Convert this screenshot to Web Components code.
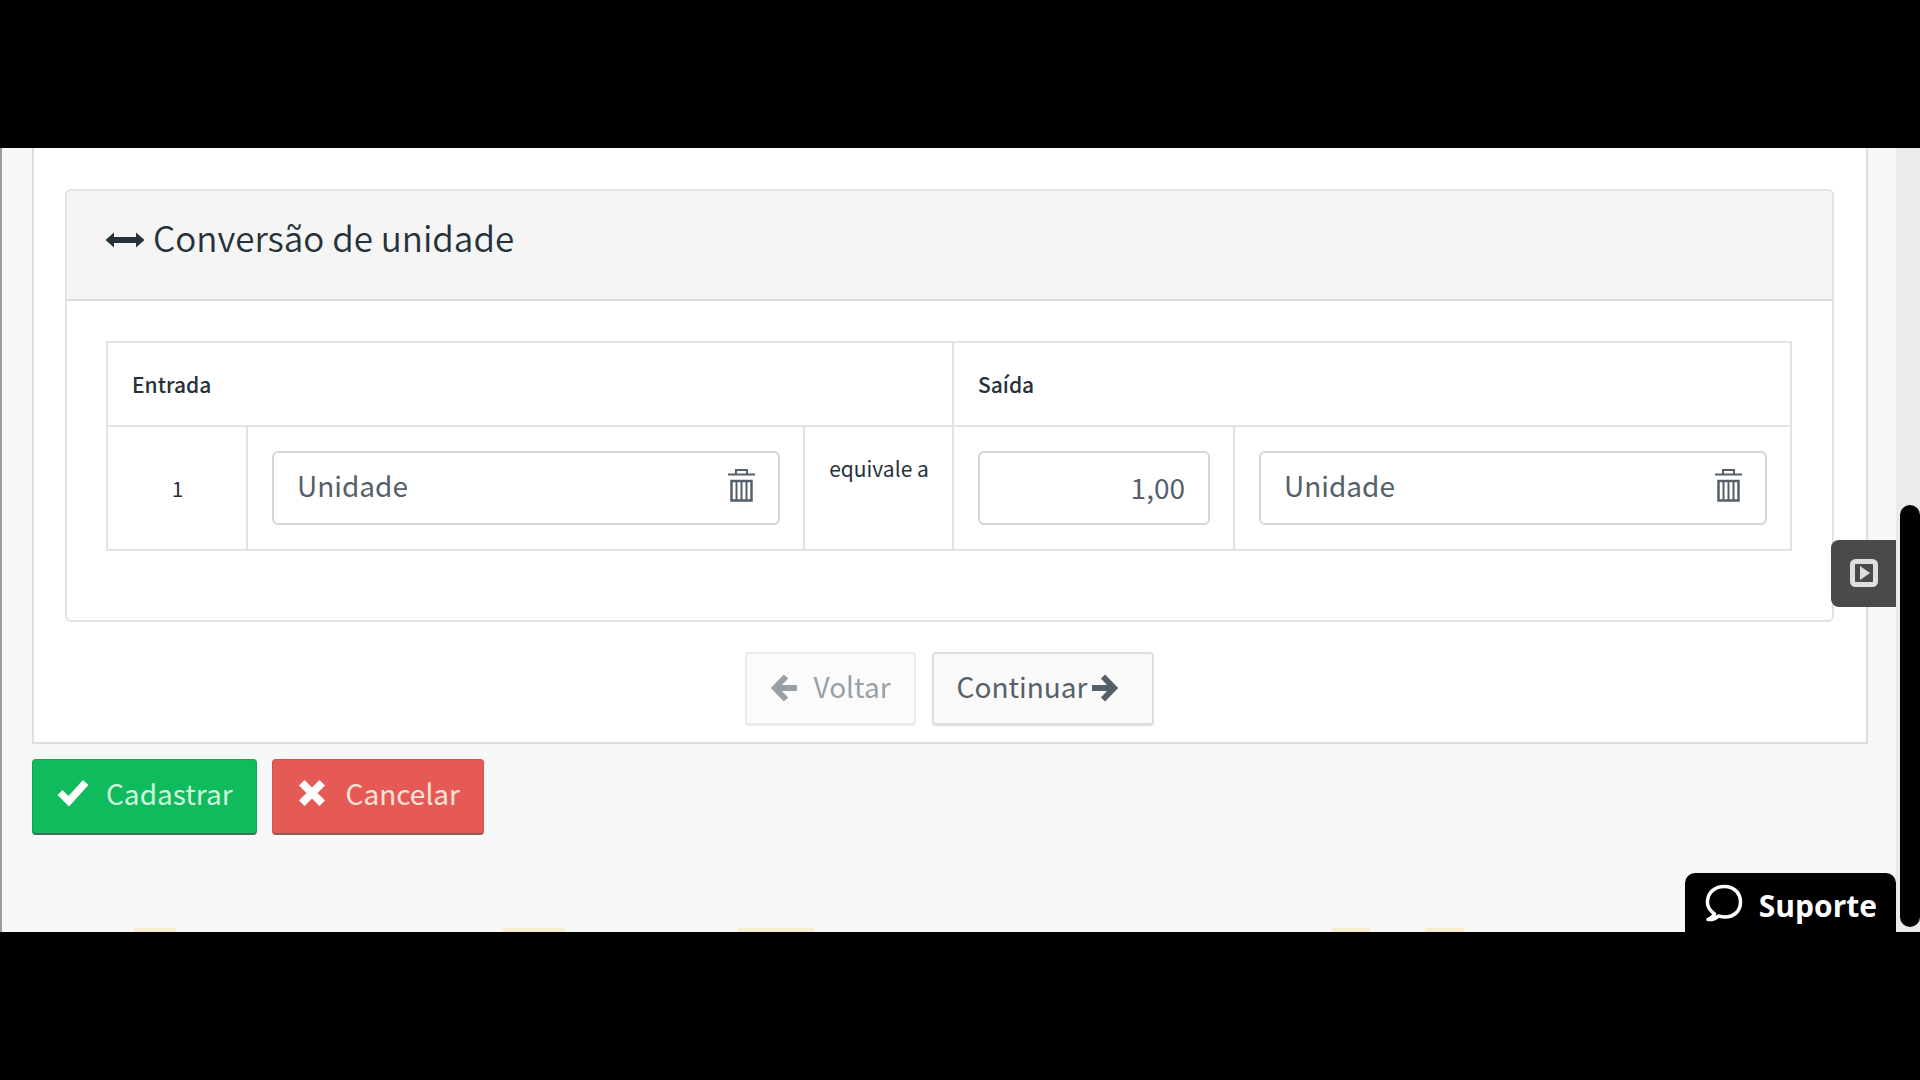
<!DOCTYPE html>
<html lang="pt-BR">
<head>
<meta charset="utf-8">
<title>Conversão de unidade</title>
<style>
  body {
    margin: 0;
    background: #000;
    color: #26323a;
    font-family: "Noto Sans CJK SC", "Noto Sans", sans-serif;
    --line: #e3e3e3;
    --muted: #55606a;
  }
</style>
</head>
<body>
<app-frame>
  <step-panel>
    <section-card>
      <span slot="title">Conversão de unidade</span>
      <conversion-table></conversion-table>
    </section-card>
    <action-button slot="nav" kind="plain" icon="left" disabled>Voltar</action-button>
    <action-button slot="nav" kind="plain" icon="right" trailing>Continuar</action-button>
  </step-panel>
  <form-actions>
    <action-button kind="success" icon="check">Cadastrar</action-button>
    <action-button kind="danger" icon="times">Cancelar</action-button>
  </form-actions>
  <highlight-row slot="bottom"></highlight-row>
  <video-tab slot="overlay"></video-tab>
  <support-tab slot="overlay">Suporte</support-tab>
</app-frame>

<script>
const define = (name, html, setup) => {
  const template = document.createElement('template');
  template.innerHTML = html;
  customElements.define(name, class extends HTMLElement {
    constructor() {
      super();
      this.attachShadow({ mode: 'open' }).append(template.content.cloneNode(true));
    }
    connectedCallback() { if (setup) setup(this, this.shadowRoot); }
  });
};

const icons = {
  left: '<svg width="26" height="28" viewBox="0 0 26 28"><path d="M15 2.500 L4 14 L15 25.500 M5 14 H26" fill="none" stroke="currentColor" stroke-width="6"/></svg>',
  right: '<svg width="26" height="28" viewBox="0 0 26 28"><path d="M11 2.500 L22 14 L11 25.500 M21 14 H0" fill="none" stroke="currentColor" stroke-width="6"/></svg>',
  check: '<svg width="32" height="28" viewBox="0 0 32 28"><path d="M0.500 16 L5.500 11 L11.500 17 L26 1 L31.500 6 L12 27.500 Z" fill="#fff"/></svg>',
  times: '<svg width="28" height="28" viewBox="0 0 28 28"><path d="M1 6.500 L6.500 1 L14 8.500 L21.500 1 L27 6.500 L19.500 14 L27 21.500 L21.500 27 L14 19.500 L6.500 27 L1 21.500 L8.500 14 Z" fill="#fff"/></svg>'
};

define('app-frame', `
  <style>
    :host { display: flex; min-height: 100vh; box-sizing: border-box; padding: 148px 0; }
    .page { position: relative; flex: 1; min-width: 0; display: flex; flex-direction: column;
      background: #f8f8f8; border-left: 2px solid #a698a8; }
    main { flex: 1; padding: 0 28px 0 30px; }
    .track { position: relative; display: flex; flex-direction: column; box-sizing: border-box;
      width: 24px; padding: 357px 0 5px 4px; background: #ebebeb; }
    .thumb { flex: 1; border-radius: 10px; background: #000; }
  </style>
  <div class="page"><main><slot></slot></main><slot name="bottom"></slot><slot name="overlay"></slot></div>
  <div class="track"><div class="thumb"></div></div>`);

define('step-panel', `
  <style>
    :host { display: block; padding: 41px 32px 16px 31px; background: #fff;
      border: 2px solid #dedede; border-top: 0; }
    nav { display: flex; justify-content: center; gap: 16px; margin-top: 30px; }
  </style>
  <slot></slot>
  <nav><slot name="nav"></slot></nav>`);

define('section-card', `
  <style>
    :host { display: block; background: #fff; border: 2px solid var(--line); border-radius: 6px; overflow: hidden; }
    header { display: flex; align-items: flex-start; gap: 8px; padding: 22px 38px 38px; background: #f5f5f5;
      border-bottom: 2px solid #dcdcdc; }
    svg { padding-top: 19px; }
    h3 { margin: 0; font-size: 35px; font-weight: 350; line-height: 48px; }
    .body { padding: 40px 40px 69px 39px; }
  </style>
  <header>
    <svg width="40" height="16" viewBox="0 0 40 16"><path d="M0.500 8 L9 0.500 V5 H31 V0.500 L39.500 8 L31 15.500 V11 H9 V15.500 Z" fill="#26323a"/></svg>
    <h3><slot name="title"></slot></h3>
  </header>
  <div class="body"><slot></slot></div>`);

define('conversion-table', `
  <style>
    :host { display: block; }
    table { width: 100%; table-layout: fixed; border-collapse: collapse; font-size: 21px; line-height: 34px; }
    th, td { box-sizing: border-box; padding: 24px 23px 24px 24px; border: 2px solid var(--line); }
    th { text-align: left; font-weight: 500; }
    .one { width: 140px; } .link { width: 149px; } .amount { width: 281px; }
    td { text-align: center; font-weight: 400; }
    td.text { vertical-align: top; white-space: nowrap; }
  </style>
  <table>
    <colgroup><col class="one"><col><col class="link"><col class="amount"><col></colgroup>
    <thead><tr><th colspan="3" scope="colgroup">Entrada</th><th colspan="2" scope="colgroup">Saída</th></tr></thead>
    <tbody><tr>
      <td>1</td>
      <td><unit-field value="Unidade" label="Unidade de entrada" clearable></unit-field></td>
      <td class="text">equivale a</td>
      <td><unit-field value="1,00" label="Quantidade de saída"></unit-field></td>
      <td><unit-field value="Unidade" label="Unidade de saída" clearable></unit-field></td>
    </tr></tbody>
  </table>`);

define('unit-field', `
  <style>
    :host { display: flex; align-items: center; box-sizing: border-box; height: 74px; padding: 0 23px 2px;
      background: #fff; border: 2px solid #d4d6d6; border-radius: 6px; color: var(--muted); }
    :host([clearable]) { padding-bottom: 6px; }
    input { flex: 1; min-width: 0; width: 100%; padding: 0; border: 0; outline: 0; background: none; color: inherit;
      font: inherit; font-size: 28px; line-height: 40px; text-align: right; }
    :host([clearable]) input { text-align: left; }
    button { display: none; padding: 0; border: 0; background: none; color: inherit; }
    :host([clearable]) button { display: flex; }
  </style>
  <input type="text">
  <button type="button" aria-label="Remover">
    <svg width="27" height="34" viewBox="0 0 27 34" fill="none" stroke="currentColor">
      <path d="M0 6.500 H27 M8 6 V2 H19 V6" stroke-width="2"/>
      <path d="M3.500 13 H23.500 V32.500 H3.500 Z" stroke-width="2.500"/>
      <path d="M8.500 13 V32 M13.500 13 V32 M18.500 13 V32" stroke-width="2"/>
    </svg>
  </button>`, (host, root) => {
  const input = root.querySelector('input');
  input.value = host.getAttribute('value');
  input.setAttribute('aria-label', host.getAttribute('label'));
});

define('action-button', `
  <style>
    :host { display: block; }
    button { display: flex; align-items: center; gap: 17px; box-sizing: border-box; height: 74px; padding: 0 23px 5px 24px;
      border: 2px solid #dedede; border-bottom-width: 3px; border-radius: 4px; background: #fafafa;
      color: var(--muted); font: inherit; font-size: 28px; line-height: 40px; }
    :host([kind="plain"]) .icon { padding-top: 4px; }
    :host([trailing]) button { flex-direction: row-reverse; gap: 5px; padding: 0 34px 5px 23px; }
    :host([disabled]) button { opacity: .6; }
    :host([kind="success"]) button, :host([kind="danger"]) button { height: 76px; padding-bottom: 8px; }
    :host([kind="success"]) button { background: #0fbb5c; border: 1px solid #11a553; border-bottom: 2px solid #456d59; color: #d3f5dd; }
    :host([kind="danger"]) button { gap: 20px; padding-left: 25px; background: #e65a56; border: 1px solid #cf5350; border-bottom: 2px solid #8b5b5a; color: #fbe3da; }
    svg { display: block; }
  </style>
  <button type="button"><span class="icon"></span><span><slot></slot></span></button>`, (host, root) => {
  root.querySelector('.icon').innerHTML = icons[host.getAttribute('icon')];
  root.querySelector('button').disabled = host.hasAttribute('disabled');
});

define('form-actions', `
  <style>:host { display: flex; gap: 15px; padding-top: 15px; }</style>
  <slot></slot>`);

define('highlight-row', `
  <style>
    :host { display: grid; height: 4px;
      grid-template-columns: 132fr 42fr 327fr 62fr 173fr 76fr 518fr 38fr 55fr 39fr 432fr; }
    i:nth-of-type(even) { background: #f5edcd; }
  </style>
  <i></i><i></i><i></i><i></i><i></i><i></i><i></i><i></i><i></i><i></i><i></i>`);

define('video-tab', `
  <style>
    :host { position: absolute; right: 0; top: 50%; display: block; }
    button { display: flex; align-items: center; justify-content: center; width: 65px; height: 67px; padding: 0 0 2px;
      border: 0; border-radius: 8px 0 0 8px; background: #4a4a4a; }
  </style>
  <button type="button" aria-label="Vídeo">
    <svg width="28" height="28" viewBox="0 0 28 28"><rect x="2.500" y="2.500" width="23" height="23" rx="3" fill="none" stroke="#dedede" stroke-width="5"/><path d="M10 7 L20 14 L10 21 Z" fill="#dedede"/></svg>
  </button>`);

define('support-tab', `
  <style>
    :host { position: absolute; right: 0; bottom: 0; display: block; }
    button { display: flex; align-items: center; gap: 16px; height: 59px; padding: 0 19px 0 20px;
      border: 0; border-radius: 10px 10px 0 0; background: #000; color: #fff;
      font: 700 30px/40px "Open Sans", "Noto Sans", sans-serif; }
    span { padding-top: 6px; }
  </style>
  <button type="button">
    <svg width="38" height="38" viewBox="0 0 38 38"><path d="M9.500 30 C4 26 2 22 2.500 17 C3 8 10 2.500 19.500 2.500 C29 2.500 35.500 9 35.500 18 C35.500 27 29 33 20 33 C17.500 33 15.500 32.500 13.500 32 C11 34.500 7 36 3 35.500 C6 34 8.500 32.500 9.500 30 Z" fill="none" stroke="#fff" stroke-width="3.500" stroke-linejoin="round"/></svg>
    <span><slot></slot></span>
  </button>`);
</script>
</body>
</html>
